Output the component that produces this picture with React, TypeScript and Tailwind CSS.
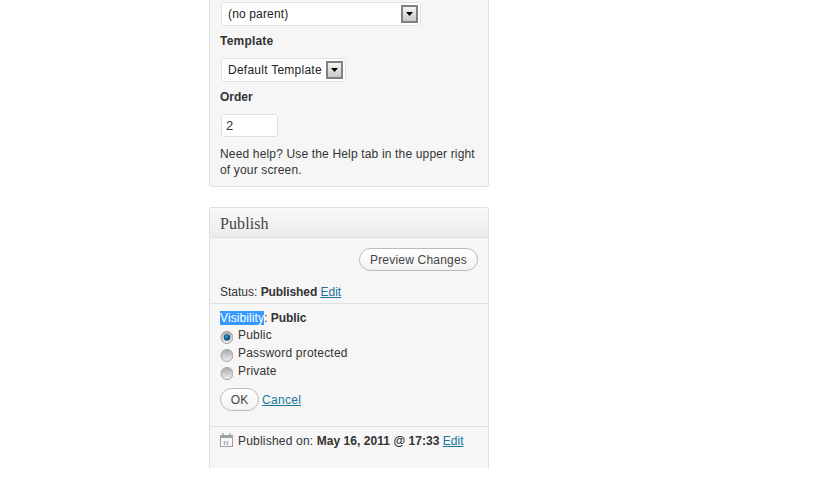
const font = "font-['Liberation_Sans',Arial,sans-serif]";

function SelectBox({ label, width, spacing }: { label: string; width: string; spacing: string }) {
  return (
    <div className={`flex h-[24px] items-center justify-between rounded-[3px] border border-[#e3e3e3] bg-white pl-[6px] pr-[2px] ${width}`}>
      <span className={`text-[12px] text-[#222] ${spacing}`}>{label}</span>
      <span className="flex h-[18px] w-[17px] items-center justify-center border-2 border-[#808080] bg-gradient-to-b from-[#f4f4f4] to-[#c8c8c8]">
        <svg width="7" height="4" viewBox="0 0 7 4"><path d="M0 0h7L3.5 4z" fill="#000" /></svg>
      </span>
    </div>
  );
}

function Radio({ checked, label }: { checked?: boolean; label: string }) {
  const id = `r-${label[0]}${label[1]}`;
  return (
    <div className="flex h-[18px] items-center gap-[5px]">
      <svg width="13" height="13" viewBox="0 0 13 13" className="mt-[5px] shrink-0">
        <defs>
          <linearGradient id={id} x1="0" y1="0" x2="0" y2="1">
            <stop offset="0" stopColor="#a8a8a8" />
            <stop offset="1" stopColor="#f2f2f2" />
          </linearGradient>
        </defs>
        <circle cx="7" cy="6.5" r="6" fill={`url(#${id})`} stroke="#a3a3a3" />
        {checked && <circle cx="7" cy="6.5" r="3.2" fill="#0f5f8c" />}
        {checked && <circle cx="6.5" cy="5.6" r="1.3" fill="#3fa0d0" />}
      </svg>
      <span className="text-[12px] tracking-[0.2px] text-[#333]">{label}</span>
    </div>
  );
}

function Pill({ children, className }: { children: React.ReactNode; className: string }) {
  return (
    <span className={`flex h-[23px] items-center justify-center rounded-[12px] border border-[#bbb] bg-gradient-to-b from-white to-[#f2f2f2] text-[12px] tracking-[0.2px] text-[#464646] ${className}`}>
      {children}
    </span>
  );
}

function CalendarIcon() {
  return (
    <svg width="13" height="14" viewBox="0 0 13 14" className="mb-[2px] shrink-0">
      <rect x="0.5" y="2.5" width="12" height="11" fill="#f6f6f6" stroke="#a0a0a0" />
      <rect x="1" y="3" width="11" height="2" fill="#a0a0a0" />
      <path d="M3 0v3M10 0v3" stroke="#8c8c8c" strokeWidth="1" />
      <path d="M4.5 8v4M7.5 8v4" stroke="#a8a8a8" strokeWidth="1.4" />
    </svg>
  );
}

const A = ({ children, className = "" }: { children: React.ReactNode; className?: string }) => (
  <span className={`text-[#21759b] underline ${className}`}>{children}</span>
);

export default function App() {
  return (
    <div className={`flex h-[479px] w-[819px] flex-col overflow-hidden bg-white pl-[209px] ${font}`}>
      <div className="h-[187px] w-[280px] rounded-b-[3px] border border-t-0 border-[#dfdfdf] bg-[#f6f6f6] pl-[10px] pt-[2px] text-[12px] text-[#333]">
        <div className="pl-[1px]"><SelectBox label="(no parent)" width="w-[200px]" spacing="tracking-[0.15px]" /></div>
        <div className="mt-[6px] h-[18px] font-bold leading-[18px] tracking-[0.2px] text-[#333]">Template</div>
        <div className="mt-[8px] pl-[1px]"><SelectBox label="Default Template" width="w-[125px]" spacing="tracking-[0.25px]" /></div>
        <div className="mt-[6px] h-[18px] font-bold leading-[18px] text-[#333]">Order</div>
        <div className="ml-[1px] mt-[8px] flex h-[23px] w-[57px] items-center rounded-[3px] border border-[#dfdfdf] bg-white pl-[4px] text-[13px] text-[#333]">2</div>
        <p className="mt-[9px] w-[262px] text-[12px] leading-[16px] tracking-[0.16px] text-[#333]">
          Need help? Use the Help tab in the upper right of your screen.
        </p>
      </div>

      <div className="mt-[20px] h-[261px] w-[280px] rounded-t-[3px] border border-b-0 border-[#dfdfdf] bg-[#f6f6f6]">
        <div className="flex h-[30px] items-center border-b border-[#dfdfdf] bg-gradient-to-b from-[#f9f9f9] to-[#ececec] pl-[10px] pt-[3px] font-['Liberation_Serif',serif] text-[16px] tracking-[0.1px] text-[#464646]">
          Publish
        </div>
        <div className="flex justify-end pr-[10px] pt-[10px]">
          <Pill className="w-[119px]">Preview Changes</Pill>
        </div>
        <div className="mt-[12px] h-[18px] pl-[10px] text-[12px] leading-[18px] text-[#333]">
          Status: <b className="tracking-[-0.1px]">Published</b> <A>Edit</A>
        </div>
        <div className="mt-[2px] border-t border-[#dfdfdf] pl-[10px] pt-[6px]">
          <div className="h-[16px] text-[12px] leading-[16px] text-[#333]">
            <span className="bg-[#3399ff] tracking-[0.1px] text-white">Visibility</span>: <b className="tracking-[-0.1px]">Public</b>
          </div>
          <Radio checked label="Public" />
          <Radio label="Password protected" />
          <Radio label="Private" />
          <div className="mt-[8px] flex items-center gap-[3px] text-[12px]">
            <Pill className="w-[39px]">OK</Pill>
            <A className="tracking-[0.3px]">Cancel</A>
          </div>
        </div>
        <div className="mt-[15px] flex items-center gap-[5px] border-t border-[#dfdfdf] pl-[10px] pt-[5px] text-[12px] text-[#333]">
          <CalendarIcon />
          <span>
            <span className="tracking-[0.2px]">Published on:</span> <b className="tracking-[0.05px]">May 16, 2011 @ 17:33</b> <A>Edit</A>
          </span>
        </div>
      </div>
    </div>
  );
}
